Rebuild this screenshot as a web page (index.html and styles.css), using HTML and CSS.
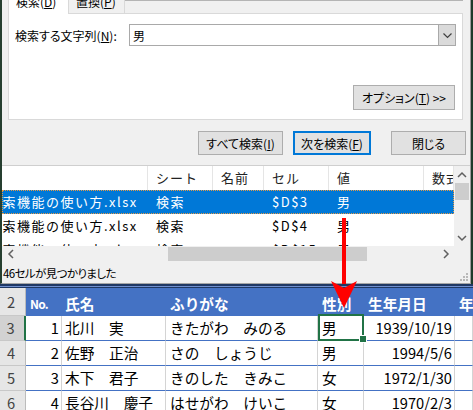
FILE: index.html
```html
<!DOCTYPE html>
<html lang="ja">
<head>
<meta charset="utf-8">
<title>検索と置換</title>
<link rel="stylesheet" href="styles.css">
</head>
<body>
<div class="screen">
  <div class="dialog">
    <div class="tabs">
      <div class="tab active"><span>検索(<u>D</u>)</span></div>
      <div class="tab"><span>置換(<u>P</u>)</span></div>
      <div class="tab-fill"></div>
    </div>
    <div class="panel">
      <div class="find-row">
        <span class="label">検索する文字列(<u>N</u>):</span>
        <div class="combo">
          <span class="combo-value">男</span>
          <span class="combo-btn"><svg width="15" height="18" viewBox="0 0 15 18"><path d="M3.5 7.5 L7.5 11.5 L11.5 7.5" fill="none" stroke="#404040" stroke-width="1.2"/></svg></span>
        </div>
      </div>
      <div class="opt-row"><button class="btn btn-opt">オプション(<u>T</u>) &gt;&gt;</button></div>
    </div>
    <div class="actions">
      <button class="btn btn-all">すべて検索(<u>I</u>)</button>
      <button class="btn btn-next">次を検索(<u>F</u>)</button>
      <button class="btn btn-close">閉じる</button>
    </div>
    <div class="results">
      <div class="results-main">
        <div class="list">
          <div class="lrow lhead">
            <span class="c c1"></span><span class="c c2">シート</span><span class="c c3">名前</span><span class="c c4">セル</span><span class="c c5">値</span><span class="c c6">数式</span>
          </div>
          <div class="lrow sel">
            <span class="c c1"><span class="book">検索機能の使い方.xlsx</span></span><span class="c c2">検索</span><span class="c c3"></span><span class="c c4">$D$3</span><span class="c c5">男</span><span class="c c6"></span>
          </div>
          <div class="lrow">
            <span class="c c1"><span class="book">検索機能の使い方.xlsx</span></span><span class="c c2">検索</span><span class="c c3"></span><span class="c c4">$D$4</span><span class="c c5">男</span><span class="c c6"></span>
          </div>
          <div class="lrow">
            <span class="c c1"><span class="book">検索機能の使い方.xlsx</span></span><span class="c c2">検索</span><span class="c c3"></span><span class="c c4">$D$15</span><span class="c c5">男</span><span class="c c6"></span>
          </div>
        </div>
        <div class="vscroll">
          <div class="sb-arrow"><svg width="16" height="16" viewBox="0 0 16 16"><path d="M4 10 L8 6 L12 10" fill="none" stroke="#606060" stroke-width="1.5"/></svg></div>
          <div class="v-thumb"></div>
          <div class="v-space"></div>
          <div class="sb-arrow"><svg width="16" height="16" viewBox="0 0 16 16"><path d="M4 6 L8 10 L12 6" fill="none" stroke="#606060" stroke-width="1.5"/></svg></div>
        </div>
      </div>
      <div class="hscroll">
        <div class="h-arrow"><svg width="16" height="16" viewBox="0 0 16 16"><path d="M10 4 L6 8 L10 12" fill="none" stroke="#606060" stroke-width="1.5"/></svg></div>
        <div class="h-track"><div class="h-thumb"></div></div>
        <div class="h-arrow"><svg width="16" height="16" viewBox="0 0 16 16"><path d="M6 4 L10 8 L6 12" fill="none" stroke="#606060" stroke-width="1.5"/></svg></div>
        <div class="corner"></div>
      </div>
    </div>
    <div class="status">
      <span class="status-text">46セルが見つかりました</span>
      <svg class="grip" width="10" height="10" viewBox="0 0 10 10"><rect x="7" y="1" width="2" height="2" fill="#b8b8b8"/><rect x="4" y="4" width="2" height="2" fill="#b8b8b8"/><rect x="7" y="4" width="2" height="2" fill="#b8b8b8"/><rect x="1" y="7" width="2" height="2" fill="#b8b8b8"/><rect x="4" y="7" width="2" height="2" fill="#b8b8b8"/><rect x="7" y="7" width="2" height="2" fill="#b8b8b8"/></svg>
    </div>
  </div>

  <div class="sheet">
    <div class="sheet-top"></div>
    <div class="srow hdr">
      <div class="rh">2</div>
      <div class="hc no">No.</div>
      <div class="hc">氏名</div>
      <div class="hc">ふりがな</div>
      <div class="hc">性別</div>
      <div class="hc">生年月日</div>
      <div class="hc">年</div>
    </div>
    <div class="srow">
      <div class="rh rh-sel">3</div>
      <div class="cell num">1</div>
      <div class="cell">北川　実</div>
      <div class="cell">きたがわ　みのる</div>
      <div class="cell active">男</div>
      <div class="cell num">1939/10/19</div>
      <div class="cell"></div>
    </div>
    <div class="srow">
      <div class="rh">4</div>
      <div class="cell num">2</div>
      <div class="cell">佐野　正治</div>
      <div class="cell">さの　しょうじ</div>
      <div class="cell">男</div>
      <div class="cell num">1994/5/6</div>
      <div class="cell"></div>
    </div>
    <div class="srow">
      <div class="rh">5</div>
      <div class="cell num">3</div>
      <div class="cell">木下　君子</div>
      <div class="cell">きのした　きみこ</div>
      <div class="cell">女</div>
      <div class="cell num">1972/1/30</div>
      <div class="cell"></div>
    </div>
    <div class="srow">
      <div class="rh">6</div>
      <div class="cell num">4</div>
      <div class="cell">長谷川　慶子</div>
      <div class="cell">はせがわ　けいこ</div>
      <div class="cell">女</div>
      <div class="cell num">1970/2/3</div>
      <div class="cell"></div>
    </div>
  </div>

  <svg class="arrow" width="473" height="410" viewBox="0 0 473 410"><rect x="342" y="218" width="4" height="66" fill="#ff0000"/><path d="M331 281 L344 288 L357 281 L344 308 Z" fill="#ff0000"/></svg>
</div>
</body>
</html>
```

FILE: styles.css
```css
* { box-sizing: border-box; }

body {
  margin: 0;
  width: 473px;
  height: 410px;
  overflow: hidden;
  background: #fff;
  font-family: "Noto Sans CJK JP", "Noto Sans", sans-serif;
}

.screen {
  position: relative;
  display: flex;
  flex-direction: column;
  width: 473px;
  height: 410px;
}

/* ---------- dialog ---------- */
.dialog {
  width: 471px;
  height: 284px;
  flex: none;
  background: #f0f0f0;
  border-left: 2px solid #263f30;
  border-right: 1px solid #9d9d9d;
  border-bottom: 1px solid #a5a5a5;
  box-shadow: 2px 0 0 #1d3a29;
  display: flex;
  flex-direction: column;
  font-size: 12px;
  color: #000;
  font-feature-settings: "palt";
}

.tabs {
  display: flex;
  height: 14px;
  width: 455px;
  margin-left: 6px;
  flex: none;
}

.tab {
  height: 14px;
  width: 56px;
  overflow: hidden;
  border-right: 1px solid #d9d9d9;
  border-bottom: 1px solid #d9d9d9;
  padding-left: 7px;
  line-height: 16px;
  white-space: nowrap;
}

.tab span { display: block; margin-top: -6px; }

.tab.active {
  width: 61px;
  background: #fff;
  border-left: 1px solid #d9d9d9;
  border-bottom: none;
}

.tab-fill {
  flex: 1;
  border-top: 1px solid #b4b4b4;
  border-bottom: 1px solid #d9d9d9;
}

.panel {
  width: 455px;
  height: 106px;
  flex: none;
  margin-left: 6px;
  background: #fff;
  border: 1px solid #d9d9d9;
  border-top: none;
  padding: 10px 6px 0 6px;
  display: flex;
  flex-direction: column;
}

.find-row {
  display: flex;
  align-items: center;
  height: 22px;
}

.combo {
  margin-left: auto;
  width: 327px;
  height: 22px;
  border: 1px solid #a9a9a9;
  background: #fff;
  display: flex;
  align-items: center;
}

.combo-value { flex: 1; padding-left: 3px; font-size: 12px; }

.combo-btn {
  width: 17px;
  height: 20px;
  background: #dadada;
  border-left: 1px solid #a9a9a9;
  display: flex;
  align-items: center;
  justify-content: center;
}

.opt-row {
  display: flex;
  justify-content: flex-end;
  margin-top: 39px;
  padding-right: 1px;
}

.btn {
  height: 24px;
  padding: 0;
  background: #e1e1e1;
  border: 1px solid #adadad;
  font: inherit;
  color: #000;
  font-feature-settings: "palt";
}

.btn-opt { width: 102px; height: 25px; }

.actions {
  display: flex;
  height: 24px;
  flex: none;
  margin-top: 11px;
  padding-left: 196px;
}

.btn-all { width: 85px; }
.btn-next { width: 78px; margin-left: 10px; border: 2px solid #0078d7; }
.btn-close { width: 75px; margin-left: 20px; }

/* ---------- results ---------- */
.results {
  margin-top: 10px;
  height: 97px;
  flex: none;
  border-top: 1px solid #cfcfcf;
  display: flex;
  flex-direction: column;
  background: #fff;
}

.results-main { display: flex; height: 80px; }

.list {
  width: 452px;
  overflow: hidden;
  font-size: 13px;
  letter-spacing: 1.5px;
  font-feature-settings: normal;
}

.lrow {
  display: flex;
  height: 24px;
  line-height: 24px;
  white-space: nowrap;
}

.c { flex: none; overflow: hidden; padding-left: 8px; }
.c1 { width: 146px; padding-left: 0; }
.c2 { width: 65px; }
.c3 { width: 51px; }
.c4 { width: 65px; }
.c5 { width: 95px; }
.c6 { width: 30px; }

.book { margin-left: -14px; }

.lhead .c { border-right: 1px solid #e5e5e5; color: #222; letter-spacing: 1px; }

.lrow.sel {
  background: #0078d7;
  color: #fff;
  outline: 1px dotted #e69a45;
  outline-offset: -1px;
}

.vscroll {
  width: 16px;
  background: #f0f0f0;
  display: flex;
  flex-direction: column;
}

.sb-arrow {
  height: 17px;
  display: flex;
  align-items: center;
  justify-content: center;
}

.v-thumb { height: 17px; margin: 0 1px; background: #cdcdcd; }
.v-space { flex: 1; }

.hscroll { display: flex; height: 16px; background: #f0f0f0; }

.h-arrow {
  width: 17px;
  display: flex;
  align-items: center;
  justify-content: center;
}

.h-track { flex: 1; display: flex; }
.h-thumb { margin-left: 149px; width: 199px; margin-top: 1px; margin-bottom: 1px; background: #cdcdcd; }
.corner { width: 16px; }

.status {
  height: 21px;
  flex: none;
  display: flex;
  align-items: center;
  padding-left: 1px;
}

.status-text { font-size: 11.5px; letter-spacing: -0.6px; }

.grip { margin-left: auto; align-self: flex-end; margin-right: 1px; margin-bottom: 1px; }

/* ---------- sheet ---------- */
.sheet {
  display: flex;
  flex-direction: column;
  font-size: 14.67px;
  color: #000;
}

.sheet-top {
  height: 4px;
  background: linear-gradient(#1f3864 0 2px, #6f8fcf 2px 3px, #1f3864 3px 4px);
}

.srow {
  display: grid;
  grid-template-columns: 26px 36px 104px 152px 46px 91px 18px;
  height: 25px;
}

.srow.hdr { height: 28px; }

.rh {
  background: #e6e6e6;
  border-right: 1px solid #bcbcbc;
  border-bottom: 1px solid #c8c8c8;
  color: #444;
  text-align: center;
  padding-right: 3px;
  line-height: 24px;
}

.hdr .rh { line-height: 27px; }

.rh-sel {
  background: #d2d2d2;
  border-right: 2px solid #217346;
}

.hc {
  background: #4472c4;
  color: #fff;
  font-weight: bold;
  padding: 6px 0 0 4px;
  line-height: 20px;
  white-space: nowrap;
  overflow: hidden;
}

.hc:nth-child(3) { padding-left: 3px; }

.hc.no { font-size: 12px; letter-spacing: -0.8px; }

.cell {
  border-right: 1px solid #d4d4d4;
  border-bottom: 1px solid #4472c4;
  padding-left: 4px;
  line-height: 24px;
  white-space: nowrap;
  overflow: hidden;
}

.cell:nth-child(3) { padding-left: 3px; }

.cell.num { text-align: right; padding-left: 0; padding-right: 2px; }

.cell.active { position: relative; overflow: visible; }

.cell.active::before {
  content: "";
  position: absolute;
  top: -2px;
  left: 0;
  right: -1px;
  bottom: -1px;
  border: 2px solid #217346;
}

.cell.active::after {
  content: "";
  position: absolute;
  width: 6px;
  height: 6px;
  right: -4px;
  bottom: -3px;
  background: #217346;
  border: 1px solid #fff;
}

.arrow {
  position: absolute;
  left: 0;
  top: 0;
  pointer-events: none;
}
```
